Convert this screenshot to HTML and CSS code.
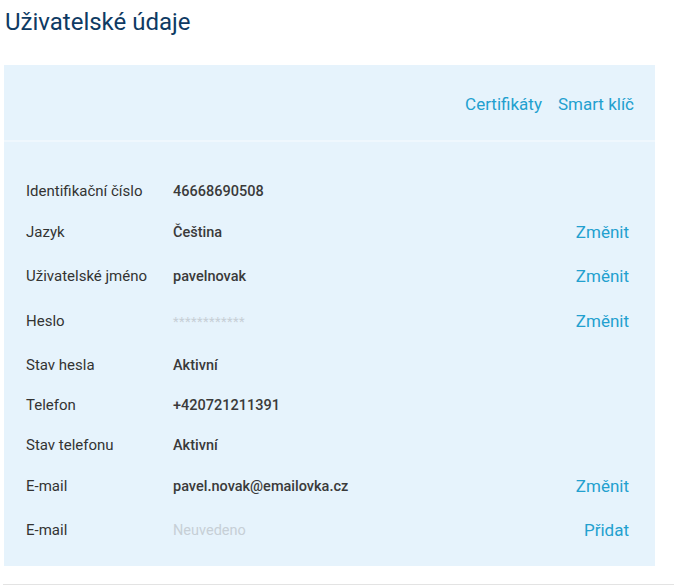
FILE: index.html
```html
<!DOCTYPE html>
<html lang="cs">
<head>
<meta charset="utf-8">
<link rel="stylesheet" href="styles.css">
</head>
<body>
<h1 class="title">Uživatelské údaje</h1>
<section class="panel">
  <div class="panel-head">
    <a class="head-link">Certifikáty</a>
    <a class="head-link">Smart klíč</a>
  </div>
  <div class="panel-body">
    <div class="row"><span class="label">Identifikační číslo</span><span class="value">46668690508</span></div>
    <div class="row link-row"><span class="label">Jazyk</span><span class="value">Čeština</span><a class="action">Změnit</a></div>
    <div class="row link-row"><span class="label">Uživatelské jméno</span><span class="value">pavelnovak</span><a class="action">Změnit</a></div>
    <div class="row link-row pass-row"><span class="label">Heslo</span><span class="value muted stars">************</span><a class="action">Změnit</a></div>
    <div class="row"><span class="label">Stav hesla</span><span class="value">Aktivní</span></div>
    <div class="row"><span class="label">Telefon</span><span class="value">+420721211391</span></div>
    <div class="row"><span class="label">Stav telefonu</span><span class="value">Aktivní</span></div>
    <div class="row link-row"><span class="label">E-mail</span><span class="value">pavel.novak@emailovka.cz</span><a class="action">Změnit</a></div>
    <div class="row link-row"><span class="label">E-mail</span><span class="value muted">Neuvedeno</span><a class="action">Přidat</a></div>
  </div>
</section>
<div class="rule"></div>
</body>
</html>
```
FILE: styles.css
```css
html, body { margin: 0; padding: 0; background: #fff; }
body { font-family: Roboto, "Noto Sans", sans-serif; width: 674px; }
.title {
  margin: 0;
  padding: 7px 0 0 5px;
  height: 65px;
  box-sizing: border-box;
  font-size: 24px;
  font-weight: 400;
  color: #0e3a63;
  line-height: 30px;
}
.panel {
  margin-left: 4px;
  width: 651px;
  background: #e6f3fc;
}
.panel-head {
  height: 77px;
  display: flex;
  justify-content: flex-end;
  align-items: center;
  gap: 16px;
  padding: 2px 21px 0 0;
  border-bottom: 2px solid #eff7fd;
  box-sizing: border-box;
}
.head-link {
  font-size: 17px;
  color: #22a0cf;
}
.panel-body {
  padding: 29px 26px 13px 22px;
}
.row {
  display: flex;
  align-items: center;
  padding: 10px 0;
  line-height: 20px;
}
.row.link-row { padding: 9px 0 11px; }
.row.pass-row { padding: 10px 0 12px; }
.label {
  width: 147px;
  font-size: 15px;
  color: #333;
}
.value {
  font-size: 14.5px;
  font-weight: 500;
  color: #3a3a3a;
  flex: 1;
  line-height: 18px;
  padding-top: 2px;
}
.value.muted { color: #c6cfd6; font-weight: 400; font-size: 14.5px; }
.value.stars { font-size: 13px; letter-spacing: 0.4px; }
.action {
  font-size: 17px;
  line-height: 24px;
  font-weight: 400;
  color: #22a0cf;
}
.rule {
  margin: 18px 0 0 3px;
  height: 1px;
  background: #e3e3e3;
}
```
